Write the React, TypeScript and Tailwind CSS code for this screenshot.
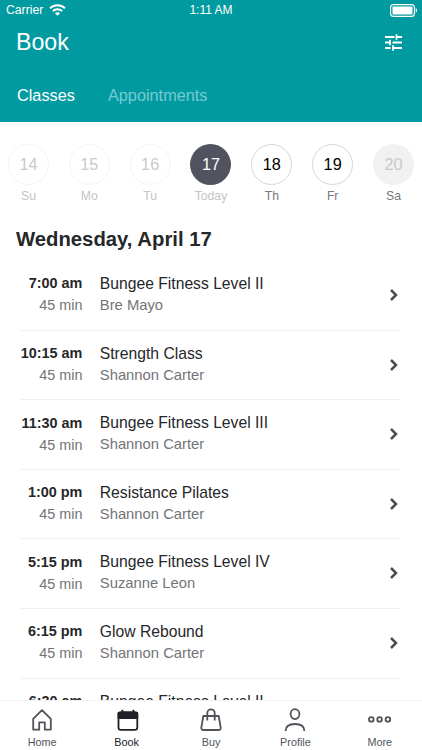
import type { ReactNode } from "react";

const days = [
  { num: 14, label: "Su", circle: "border border-[#f4f4f4] text-[#c9c9c9]", text: "text-[#c4c4c4]" },
  { num: 15, label: "Mo", circle: "border border-[#f4f4f4] text-[#c9c9c9]", text: "text-[#c4c4c4]" },
  { num: 16, label: "Tu", circle: "border border-[#f4f4f4] text-[#c9c9c9]", text: "text-[#c4c4c4]" },
  { num: 17, label: "Today", circle: "bg-[#51535e] text-white", text: "text-[#c4c4c4]" },
  { num: 18, label: "Th", circle: "border border-[#d6d6d6] text-black", text: "text-[#77787b]" },
  { num: 19, label: "Fr", circle: "border border-[#d6d6d6] text-black", text: "text-[#77787b]" },
  { num: 20, label: "Sa", circle: "bg-[#f1f1f1] text-[#c9c9c9]", text: "text-[#77787b]" },
];

const classes = [
  { time: "7:00 am", length: "45 min", title: "Bungee Fitness Level II", teacher: "Bre Mayo" },
  { time: "10:15 am", length: "45 min", title: "Strength Class", teacher: "Shannon Carter" },
  { time: "11:30 am", length: "45 min", title: "Bungee Fitness Level III", teacher: "Shannon Carter" },
  { time: "1:00 pm", length: "45 min", title: "Resistance Pilates", teacher: "Shannon Carter" },
  { time: "5:15 pm", length: "45 min", title: "Bungee Fitness Level IV", teacher: "Suzanne Leon" },
  { time: "6:15 pm", length: "45 min", title: "Glow Rebound", teacher: "Shannon Carter" },
  { time: "6:30 am", length: "45 min", title: "Bungee Fitness Level II", teacher: "Shannon Carter" },
];

export default function App() {
  return (
    <div className="flex h-[750px] w-[422px] flex-col overflow-hidden bg-white font-['Liberation_Sans',Arial,sans-serif]">
      {/* Header */}
      <header className="h-[122px] shrink-0 bg-[#029aa1] text-white">
        <div className="grid h-5 grid-cols-3 items-center pr-1 pl-[6px] text-[12.2px]">
          <div className="flex items-center gap-[6px]">
            <span>Carrier</span>
            <WifiIcon />
          </div>
          <span className="pr-[2px] text-center text-[12px]">1:11 AM</span>
          <BatteryIcon />
        </div>
        <div className="flex h-[45px] items-center justify-between pr-5 pl-[16px]">
          <h1 className="text-[23.2px]">Book</h1>
          <FilterIcon />
        </div>
        <div className="flex items-center gap-[33px] pt-[19px] pl-[17px] text-[16.3px] leading-[22px]">
          <span>Classes</span>
          <span className="text-[#76cbd0]">Appointments</span>
        </div>
      </header>

      {/* Day picker */}
      <div className="mt-[22px] flex shrink-0 justify-between pr-[8px] pl-[8px]">
        {days.map((d) => (
          <div key={d.num} className="flex w-[41px] flex-col items-center">
            <div className={`flex size-[41px] items-center justify-center rounded-full text-[16.3px] ${d.circle}`}>
              {d.num}
            </div>
            <span className={`mt-[3px] text-[12.2px] leading-4 ${d.text}`}>{d.label}</span>
          </div>
        ))}
      </div>

      <h2 className="mt-[21px] shrink-0 pl-4 text-[20.3px] leading-7 font-bold text-[#262729]">
        Wednesday, April 17
      </h2>

      {/* Class list */}
      <div className="min-h-0 flex-1 overflow-hidden pt-[8px]">
        {classes.map((c) => (
          <ClassRow key={c.time} {...c} />
        ))}
      </div>

      {/* Tab bar */}
      <nav className="grid h-[50px] shrink-0 grid-cols-5 border-t border-[#f3f3f3] bg-white">
        <Tab label="Home">
          <path d="M4.2 22.7V11.8L13 3.2l8.8 8.6v10.9h-6v-7.3h-5.6v7.3z" />
        </Tab>
        <Tab label="Book" active>
          <rect x="4.5" y="5.2" width="18.8" height="17.6" rx="2.4" />
          <path d="M4.5 6h18.8v5H4.5z" fill="currentColor" />
          <path d="M8.4 2.8v3M19.4 2.8v3" />
        </Tab>
        <Tab label="Buy">
          <path d="M5.3 9h15.4l2 11.7a2 2 0 0 1-2 2.3H5.3a2 2 0 0 1-2-2.3z" />
          <path d="M9.3 13.5V6.2a3.7 3.9 0 0 1 7.4 0v7.3" />
        </Tab>
        <Tab label="Profile">
          <ellipse cx="13" cy="7.1" rx="4.4" ry="5" />
          <path d="M3.6 24c0-4.5 3.4-7 9.4-7s9.4 2.5 9.4 7" />
        </Tab>
        <Tab label="More">
          <circle cx="4.3" cy="12.4" r="2.3" />
          <circle cx="12.6" cy="12.4" r="2.3" />
          <circle cx="20.9" cy="12.4" r="2.3" />
        </Tab>
      </nav>
    </div>
  );
}

function ClassRow({
  time,
  length,
  title,
  teacher,
}: {
  time: string;
  length: string;
  title: string;
  teacher: string;
}) {
  return (
    <div className="mr-[21px] ml-[20px] flex h-[69.6px] border-b border-[#f0f0f0] pt-[12px]">
      <div className="mt-[-0.7px] w-[62.4px] shrink-0 text-right text-[14.4px] whitespace-nowrap">
        <p className="leading-[22px] font-bold text-[#262729]">{time}</p>
        <p className="leading-[22px] text-[#737478]">{length}</p>
      </div>
      <div className="ml-[17.4px] flex-1">
        <p className="text-[15.7px] leading-[22px] text-[#262729]">{title}</p>
        <p className="text-[14.8px] leading-[21px] text-[#737478]">{teacher}</p>
      </div>
      <svg width="10" height="14" viewBox="0 0 10 14" className="mt-[15px] mr-[2px]" fill="none" stroke="#4b4c50" strokeWidth="2.5">
        <path d="M2 2l5 5-5 5" />
      </svg>
    </div>
  );
}

function Tab({ label, active, children }: { label: string; active?: boolean; children: ReactNode }) {
  return (
    <div className={`flex flex-col items-center pt-[6px] ${active ? "text-[#202127]" : "text-[#51535a]"}`}>
      <svg width="26" height="26" viewBox="0 0 26 26" fill="none" stroke="currentColor" strokeWidth="1.8" strokeLinejoin="round">
        {children}
      </svg>
      <span className="mt-[3px] text-[10.8px] leading-[13px]">{label}</span>
    </div>
  );
}

function WifiIcon() {
  return (
    <svg width="17" height="12" viewBox="0 0 17 12" fill="none" stroke="white" strokeWidth="1.9">
      <path d="M1 4.2c4.3-4 10.7-4 15 0" />
      <path d="M3.8 7.1c2.7-2.5 6.7-2.5 9.4 0" />
      <path d="M5.9 9.1c1.5-1.3 3.7-1.3 5.2 0L8.5 11.8z" fill="white" stroke="none" />
    </svg>
  );
}

function BatteryIcon() {
  return (
    <svg width="28" height="13" viewBox="0 0 28 13" className="justify-self-end">
      <rect x=".6" y=".6" width="23.8" height="11.8" rx="3" fill="none" stroke="white" strokeWidth="1.1" />
      <rect x="2.5" y="2.5" width="20" height="8" rx="1" fill="white" />
      <path d="M25.7 4.3c1.8.5 1.8 3.9 0 4.4z" fill="white" />
    </svg>
  );
}

function FilterIcon() {
  return (
    <svg width="17" height="17" viewBox="0 0 17 17" fill="none" stroke="white" strokeWidth="1.8">
      <path d="M0 3h9.5M11.5 3H17M11.5.3v5.4" />
      <path d="M0 8.5h5M7.5 8.5H17M5 5.8v5.4" />
      <path d="M0 14h5.5M8 14h9M8 11.3v5.4" />
    </svg>
  );
}
